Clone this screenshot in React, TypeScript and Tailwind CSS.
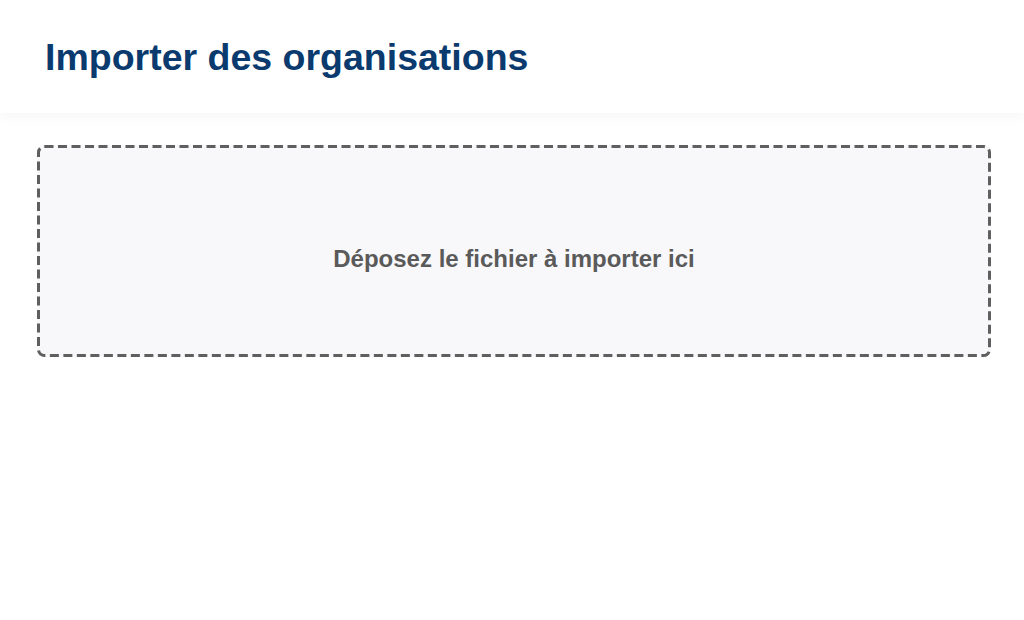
import React from "react";

export default function App() {
  return (
    <div className="min-h-[620px] bg-white" style={{ fontFamily: '"Liberation Sans", Arial, sans-serif' }}>
      <header className="h-[113px] bg-white flex items-center pl-[45px] shadow-[0_4px_12px_rgba(0,0,0,0.04)] relative">
        <h1 className="text-[37.5px] font-bold text-[#0a3a6e] leading-none mt-[2px]">Importer des organisations</h1>
      </header>
      <div className="pt-[32px] pl-[37px] pr-[33px]">
        <div className="relative h-[212px] rounded-[7px] bg-[#f8f8fa] flex items-center justify-center pt-[16px]">
          <svg className="absolute inset-0 w-full h-full pointer-events-none" preserveAspectRatio="none">
            <rect
              x="1.5"
              y="1.5"
              width="calc(100% - 3px)"
              height="calc(100% - 3px)"
              rx="6"
              fill="none"
              stroke="#5f5f5f"
              strokeWidth="3"
              strokeDasharray="9 4.5"
              style={{ width: "calc(100% - 3px)", height: "calc(100% - 3px)" }}
            />
          </svg>
          <p className="text-[24px] font-bold text-[#5a5a5a] leading-none">Déposez le fichier à importer ici</p>
        </div>
      </div>
    </div>
  );
}
